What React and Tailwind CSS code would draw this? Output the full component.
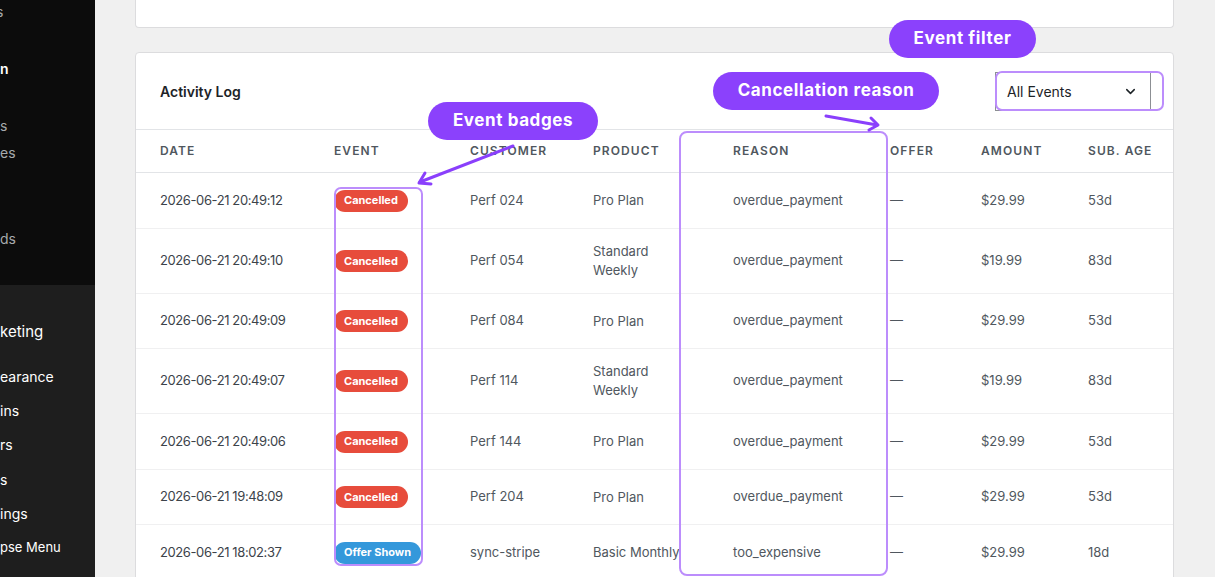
import React from 'react';
import { ChevronDown } from 'lucide-react';

const rows = [
  { date: '2026-06-21 20:49:12', event: 'cancelled', customer: 'Perf 024', product: 'Pro Plan', reason: 'overdue_payment', amount: '$29.99', age: '53d', h: 'h-[56px]' },
  { date: '2026-06-21 20:49:10', event: 'cancelled', customer: 'Perf 054', product: 'Standard Weekly', reason: 'overdue_payment', amount: '$19.99', age: '83d', h: 'h-[65px]' },
  { date: '2026-06-21 20:49:09', event: 'cancelled', customer: 'Perf 084', product: 'Pro Plan', reason: 'overdue_payment', amount: '$29.99', age: '53d', h: 'h-[55px]' },
  { date: '2026-06-21 20:49:07', event: 'cancelled', customer: 'Perf 114', product: 'Standard Weekly', reason: 'overdue_payment', amount: '$19.99', age: '83d', h: 'h-[65px]' },
  { date: '2026-06-21 20:49:06', event: 'cancelled', customer: 'Perf 144', product: 'Pro Plan', reason: 'overdue_payment', amount: '$29.99', age: '53d', h: 'h-[56px]' },
  { date: '2026-06-21 19:48:09', event: 'cancelled', customer: 'Perf 204', product: 'Pro Plan', reason: 'overdue_payment', amount: '$29.99', age: '53d', h: 'h-[55px]' },
  { date: '2026-06-21 18:02:37', event: 'offer', customer: 'sync-stripe', product: 'Basic Monthly', reason: 'too_expensive', amount: '$29.99', age: '18d', h: 'h-[56px]' },
];

const headers = ['Date', 'Event', 'Customer', 'Product', 'Reason', 'Offer', 'Amount', 'Sub. Age'];

const EventBadge = ({ type }) =>
  type === 'offer' ? (
    <span className="inline-flex items-center h-[22px] px-[10px] rounded-full bg-[#3498db] text-white text-[11px] font-bold">
      Offer Shown
    </span>
  ) : (
    <span className="inline-flex items-center h-[22px] px-[10px] rounded-full bg-[#e74c3c] text-white text-[11px] font-bold">
      Cancelled
    </span>
  );

const Sidebar = () => (
  <div className="w-[95px] shrink-0 flex flex-col text-[14px] overflow-hidden whitespace-nowrap">
    {/* dark top block */}
    <div className="h-[285px] bg-[#0c0c0c] text-[#a7aaad]">
      <div className="pt-[3px] h-[18px] leading-[18px] -ml-[4px]">s</div>
      <div className="mt-[42px] h-[18px] leading-[18px] text-white font-semibold">n</div>
      <div className="mt-[39px] h-[18px] leading-[18px]">s</div>
      <div className="mt-[9px] h-[18px] leading-[18px]">es</div>
      <div className="mt-[8px] h-[18px] leading-[18px] -ml-[5px] text-[#6b6e72]">t</div>
      <div className="mt-[42px] h-[18px] leading-[18px]">ds</div>
    </div>
    {/* lighter bottom block */}
    <div className="flex-1 bg-[#1e1e1e] text-white">
      <div className="mt-[38px] h-[18px] leading-[18px] text-[15px]">keting</div>
      <div className="mt-[27px] h-[18px] leading-[18px]">earance</div>
      <div className="mt-[16px] h-[18px] leading-[18px]">ins</div>
      <div className="mt-[16px] h-[18px] leading-[18px]">rs</div>
      <div className="mt-[17px] h-[18px] leading-[18px]">s</div>
      <div className="mt-[16px] h-[18px] leading-[18px]">ings</div>
      <div className="mt-[15px] h-[18px] leading-[18px] text-[13px]">pse Menu</div>
    </div>
  </div>
);

const Pill = ({ className, children }) => (
  <div
    className={`absolute flex items-center justify-center rounded-full bg-[#8b41fc] text-white text-[17px] font-bold tracking-[0.6px] ${className}`}
  >
    {children}
  </div>
);

const App = () => {
  return (
    <div className="relative w-[1215px] h-[577px] overflow-hidden flex bg-[#f0f0f0] font-['Inter','Liberation_Sans',sans-serif]">
      <Sidebar />

      <div className="flex-1 pl-[40px] pr-[41px]">
        {/* previous card, scrolled out */}
        <div className="h-[28px] bg-white border-x border-b border-[#dcdcde] rounded-b-[4px]" />

        <div className="mt-[24px] bg-white border border-[#dcdcde] rounded-[4px]">
          <div className="h-[76px] flex items-center justify-between pl-[24px] pr-[22px]">
            <h2 className="text-[14px] font-semibold text-[#1d2327]">Activity Log</h2>
            <div className="w-[156px] h-[39px] border border-[#8c8f94] flex items-center justify-between pl-[11px] pr-[12px] text-[14px] text-[#1d2327]">
              <span>All Events</span>
              <ChevronDown size={15} strokeWidth={2.4} />
            </div>
          </div>

          <table className="w-full table-fixed border-collapse">
            <colgroup>
              <col className="w-[198px]" />
              <col className="w-[136px]" />
              <col className="w-[123px]" />
              <col className="w-[140px]" />
              <col className="w-[157px]" />
              <col className="w-[91px]" />
              <col className="w-[107px]" />
              <col className="w-[85px]" />
            </colgroup>
            <thead>
              <tr className="h-[43px] border-y border-[#e2e4e7]">
                {headers.map((h, i) => (
                  <th
                    key={h}
                    className={`text-left align-middle uppercase text-[12px] font-semibold tracking-[1.1px] text-[#50575e] ${i === 0 ? 'pl-[24px]' : ''}`}
                  >
                    {h}
                  </th>
                ))}
              </tr>
            </thead>
            <tbody className="text-[13px] text-[#50575e]">
              {rows.map((r) => (
                <tr key={r.date} className={`${r.h} border-b border-[#f0f0f1] align-middle`}>
                  <td className="pl-[24px] text-[#3c434a] tracking-[-0.4px]">{r.date}</td>
                  <td>
                    <EventBadge type={r.event} />
                  </td>
                  <td>{r.customer}</td>
                  <td>
                    <div className="max-w-[92px] leading-[19px]">{r.product}</div>
                  </td>
                  <td>{r.reason}</td>
                  <td>—</td>
                  <td>{r.amount}</td>
                  <td>{r.age}</td>
                </tr>
              ))}
            </tbody>
          </table>
        </div>
      </div>

      {/* annotation overlays */}
      <div className="absolute left-[334px] top-[187px] w-[89px] h-[379px] border-2 border-[#bc8dfc] rounded-[7px] pointer-events-none" />
      <div className="absolute left-[679px] top-[131px] w-[209px] h-[445px] border-2 border-[#bc8dfc] rounded-[8px] pointer-events-none" />
      <div className="absolute left-[995px] top-[71px] w-[169px] h-[40px] border-2 border-[#bc8dfc] rounded-[7px] pointer-events-none" />

      <Pill className="left-[889px] top-[20px] w-[147px] h-[38px]">Event filter</Pill>
      <Pill className="left-[713px] top-[72px] w-[226px] h-[38px]">Cancellation reason</Pill>
      <Pill className="left-[428px] top-[102px] w-[170px] h-[38px]">Event badges</Pill>

      <svg className="absolute inset-0 pointer-events-none" width="1215" height="577" viewBox="0 0 1215 577">
        <g stroke="#8a3ffc" strokeWidth="3" strokeLinecap="round" strokeLinejoin="round" fill="none">
          <path d="M513 146 L420 182" />
          <path d="M425 173 L419 183 L431 184" />
          <path d="M826 116 L877 125" />
          <path d="M871 118 L878 125 L869 130" />
        </g>
      </svg>
    </div>
  );
};

export default App;
